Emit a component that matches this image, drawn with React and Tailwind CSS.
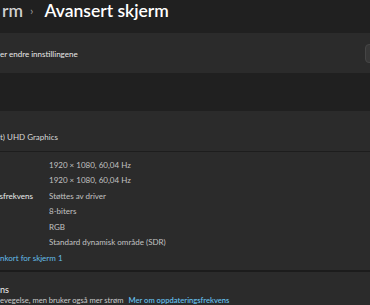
import React from 'react';

const rows = [
  { label: '', value: '1920 × 1080, 60,04 Hz' },
  { label: '', value: '1920 × 1080, 60,04 Hz' },
  { label: 'sfrekvens', value: 'Støttes av driver' },
  { label: '', value: '8-biters' },
  { label: '', value: 'RGB' },
  { label: '', value: 'Standard dynamisk område (SDR)' },
];

export default function App() {
  return (
    <div className="w-[370px] h-[305px] overflow-hidden bg-[#202020] text-white font-['Lato','Open_Sans',sans-serif]">
      {/* breadcrumb header */}
      <header className="h-[33px] flex items-center text-[17.5px] font-semibold leading-none pb-[11px]">
        <span className="text-[#cfcfcf] ml-[2px]">rm</span>
        <span className="ml-[7px] text-[#9a9a9a] text-[12px] font-normal">›</span>
        <span className="ml-[11px]">Avansert skjerm</span>
      </header>

      {/* select display card */}
      <section className="h-[40px] bg-[#2b2b2b] flex items-center justify-between text-[8px]">
        <span className="text-[#e8e8e8] mt-[1px]">er endre innstillingene</span>
        <div className="w-[12px] h-[19px] -mr-[7px] rounded-[4px] bg-[#373737] border border-[#454545]"></div>
      </section>

      <div className="h-[38px]"></div>

      {/* display information card */}
      <section className="bg-[#2b2b2b]">
        <div className="h-[40px] flex items-center pt-[12px] text-[8px] text-[#d8d8d8]">
          <span>t) UHD Graphics</span>
        </div>
        <div className="h-px bg-[#1d1d1d]"></div>
        <div className="pt-[5px] pb-[4px] text-[8px]">
          {rows.map((r, i) => (
            <div key={i} className="h-[15.5px] flex items-center gap-[16px]">
              <span className="w-[33px] shrink-0 flex justify-end whitespace-nowrap text-[#ececec]">{r.label}</span>
              <span className="text-[#c2c2c2]">{r.value}</span>
            </div>
          ))}
          <div className="h-[16px] flex items-center text-[#64bde8]">nkort for skjerm 1</div>
        </div>
      </section>

      <div className="h-[2px] bg-[#1c1c1c]"></div>

      {/* refresh rate card */}
      <section className="bg-[#2b2b2b] h-[40px] pt-[13px]">
        <div className="text-[9px] leading-[10px] text-[#f0f0f0]">ns</div>
        <div className="text-[7.6px] leading-[10px] text-[#cccccc] whitespace-nowrap">
          evegelse, men bruker også mer strøm
          <span className="ml-[5px] text-[#64bde8] font-semibold">Mer om oppdateringsfrekvens</span>
        </div>
      </section>
    </div>
  );
}
